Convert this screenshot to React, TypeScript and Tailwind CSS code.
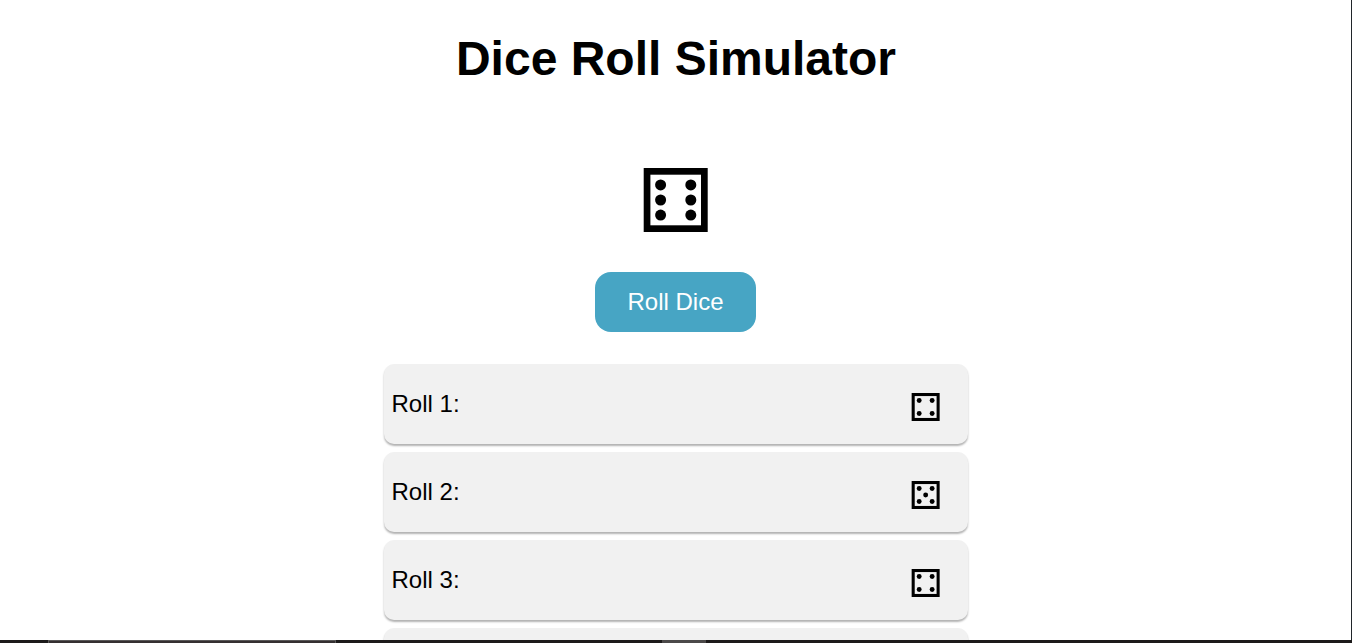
type Face = 4 | 5 | 6;
type DieProps = { value: Face; className: string; stroke: number; radius: number; inset: number; shift: number };

const pips: Record<Face, [number, number][]> = {
  4: [[-1, -1], [1, -1], [-1, 1], [1, 1]],
  5: [[-1, -1], [1, -1], [0, 0], [-1, 1], [1, 1]],
  6: [[-1, -1], [1, -1], [-1, 0], [1, 0], [-1, 1], [1, 1]],
};

function Die({ value, className, stroke, radius, inset, shift }: DieProps) {
  return (
    <svg viewBox="0 0 64 64" className={`overflow-visible ${className}`} role="img" aria-label={String(value)}>
      <g transform={`translate(${shift} 0)`}>
        <rect x={stroke / 2} y={stroke / 2} width={64 - stroke} height={64 - stroke} fill="none" stroke="black" strokeWidth={stroke} />
        {pips[value].map(([x, y], i) => (
          <circle key={i} cx={32 + x * inset} cy={32 + y * inset} r={radius} />
        ))}
      </g>
    </svg>
  );
}

const rolls: { id: number; value: Face }[] = [
  { id: 1, value: 4 },
  { id: 2, value: 5 },
  { id: 3, value: 4 },
];

const cardClass =
  "flex h-20 items-center justify-between rounded-[10px] bg-[#f1f1f1] pr-7 pl-2 text-2xl shadow-[0_2px_2px_rgba(0,0,0,0.3)]";

export default function App() {
  return (
    <div className="flex h-[643px] w-[1352px] flex-col overflow-hidden bg-white font-['Liberation_Sans',Arial,sans-serif] text-black">
      <div className="flex h-[640px] shrink-0 border-r border-[#20252a]">
        <main className="flex w-full flex-col items-center overflow-hidden pt-8">
          <h1 className="h-[55px] shrink-0 pl-px text-[48px] leading-[53px] font-bold">Dice Roll Simulator</h1>
          <Die value={6} className="mt-[81px] size-16 shrink-0" stroke={6.7} radius={5.5} inset={15.1} shift={-0.3} />
          <button className="mt-10 h-[60px] shrink-0 rounded-2xl bg-[#47a5c4] px-8 text-2xl text-white">Roll Dice</button>
          <ul className="mt-8 flex w-[584px] shrink-0 flex-col gap-2">
            {rolls.map((roll) => (
              <li key={roll.id} className={cardClass}>
                <span>Roll {roll.id}:</span>
                <Die value={roll.value} className="mt-[6px] size-7" stroke={7} radius={5.6} inset={14.8} shift={-0.8} />
              </li>
            ))}
            <li className={cardClass} />
          </ul>
        </main>
      </div>
      <footer className="flex h-[3px] shrink-0 bg-[#1c1a1a]">
        <div className="ml-12 h-full w-72 border-x border-t border-[#5a5858] bg-[#343031]" />
        <div className="ml-[326px] h-full w-11 bg-[#4b4949]" />
      </footer>
    </div>
  );
}
